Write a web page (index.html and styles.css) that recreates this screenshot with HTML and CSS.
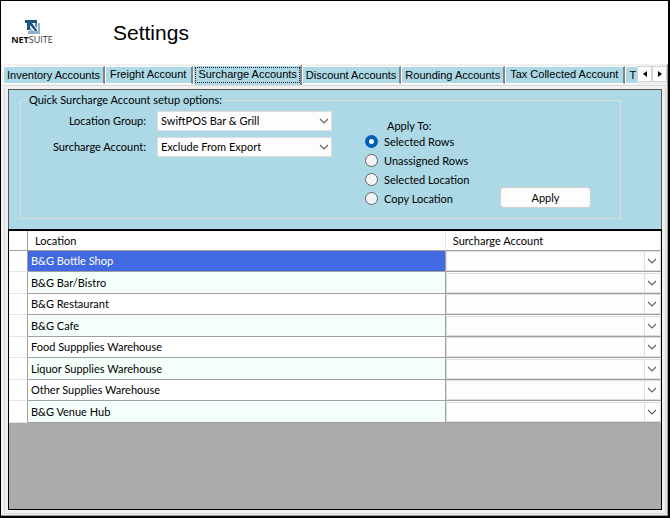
FILE: index.html
```html
<!DOCTYPE html>
<html lang="en">
<head>
  <meta charset="UTF-8" />
  <meta name="viewport" content="width=device-width, initial-scale=1.0"/>
  <title>Settings</title>
  <link rel="stylesheet" href="styles.css">
</head>
<body>

  <!-- Shared icons -->
  <svg class="sprite" aria-hidden="true">
    <symbol id="chevron" viewBox="0 0 10 6">
      <path d="M1 1l4 4 4-4" fill="none" stroke="currentColor" stroke-width="1.2"/>
    </symbol>
  </svg>

  <div class="window">

    <!-- Logo and title -->
    <header class="header">
      <div class="logo">
        <svg class="logo-mark" viewBox="0 0 15 14" aria-hidden="true">
          <path d="M0 0h12v3H5v7H2V3H0z" fill="#1d5480"/>
          <path d="M13 3h2v11H3v-3h10z" fill="#8fb0c8"/>
          <path d="M5 3h2l5 7v1h-2L5 5z" fill="#1d5480"/>
          <path d="M10 3h2v5l-2-2z" fill="#5d8cae"/>
          <path d="M5 7l3 4H5z" fill="#8fb0c8"/>
        </svg>
        <div class="logo-text"><b>NET</b>SUITE</div>
      </div>
      <h1>Settings</h1>
    </header>

    <!-- Tabs -->
    <nav class="tab-bar">
      <div class="tabs" role="tablist">
        <button class="tab" role="tab">Inventory Accounts</button>
        <button class="tab raised" role="tab">Freight Account</button>
        <button class="tab active" role="tab" aria-selected="true">Surcharge Accounts</button>
        <button class="tab" role="tab">Discount Accounts</button>
        <button class="tab" role="tab">Rounding Accounts</button>
        <button class="tab raised" role="tab">Tax Collected Account</button>
        <button class="tab last" role="tab">T</button>
      </div>
      <div class="scroller">
        <button aria-label="Scroll left"><svg viewBox="0 0 4 6"><path d="M4 0v6L0 3z"/></svg></button>
        <button aria-label="Scroll right"><svg viewBox="0 0 4 6"><path d="M0 0v6l4-3z"/></svg></button>
      </div>
    </nav>

    <main class="page">

      <!-- Quick setup -->
      <form class="setup">
        <fieldset>
          <legend>Quick Surcharge Account setup options:</legend>
          <div class="options">
            <div class="fields">
              <label for="group">Location Group:</label>
              <span class="select">
                <select id="group"><option>SwiftPOS Bar &amp; Grill</option></select>
                <svg><use href="#chevron"/></svg>
              </span>
              <label for="account">Surcharge Account:</label>
              <span class="select">
                <select id="account"><option>Exclude From Export</option></select>
                <svg><use href="#chevron"/></svg>
              </span>
            </div>
            <div class="apply-to" role="radiogroup" aria-labelledby="applyTo">
              <div class="apply-title" id="applyTo">Apply To:</div>
              <label><input type="radio" name="apply" checked>Selected Rows</label>
              <label><input type="radio" name="apply">Unassigned Rows</label>
              <label><input type="radio" name="apply">Selected Location</label>
              <label><input type="radio" name="apply">Copy Location</label>
            </div>
            <button class="apply" type="button">Apply</button>
          </div>
        </fieldset>
      </form>

      <!-- Accounts by location -->
      <div class="grid">
        <table>
          <colgroup><col class="col-head"><col><col class="col-account"></colgroup>
          <thead>
            <tr><th></th><th>Location</th><th>Surcharge Account</th></tr>
          </thead>
          <tbody>
            <tr class="selected"><td></td><td>B&amp;G Bottle Shop</td><td><span class="select"><select aria-label="B&amp;G Bottle Shop"></select><svg><use href="#chevron"/></svg></span></td></tr>
            <tr><td></td><td>B&amp;G Bar/Bistro</td><td><span class="select"><select aria-label="B&amp;G Bar/Bistro"></select><svg><use href="#chevron"/></svg></span></td></tr>
            <tr><td></td><td>B&amp;G Restaurant</td><td><span class="select"><select aria-label="B&amp;G Restaurant"></select><svg><use href="#chevron"/></svg></span></td></tr>
            <tr><td></td><td>B&amp;G Cafe</td><td><span class="select"><select aria-label="B&amp;G Cafe"></select><svg><use href="#chevron"/></svg></span></td></tr>
            <tr><td></td><td>Food Suppplies Warehouse</td><td><span class="select"><select aria-label="Food Suppplies Warehouse"></select><svg><use href="#chevron"/></svg></span></td></tr>
            <tr><td></td><td>Liquor Supplies Warehouse</td><td><span class="select"><select aria-label="Liquor Supplies Warehouse"></select><svg><use href="#chevron"/></svg></span></td></tr>
            <tr><td></td><td>Other Supplies Warehouse</td><td><span class="select"><select aria-label="Other Supplies Warehouse"></select><svg><use href="#chevron"/></svg></span></td></tr>
            <tr><td></td><td>B&amp;G Venue Hub</td><td><span class="select"><select aria-label="B&amp;G Venue Hub"></select><svg><use href="#chevron"/></svg></span></td></tr>
          </tbody>
        </table>
      </div>
    </main>
  </div>

</body>
</html>
```
FILE: styles.css
```css
* {
  box-sizing: border-box;
}

body {
  margin: 0;
  font-family: Lato, "Liberation Sans", Arial, sans-serif;
  font-size: 11px;
  line-height: 14px;
  color: #000;
}

button,
select {
  font: inherit;
  color: inherit;
}

.sprite {
  display: none;
}

/* Window frame */
.window {
  display: flex;
  flex-direction: column;
  min-height: 100vh;
  background: #f0f0f0;
  border: 1px solid #000;
  border-right-width: 2px;
  border-bottom-width: 2px;
  box-shadow: inset -1px -1px 0 #999;
}

/* Header */
.header {
  display: flex;
  align-items: center;
  gap: 61px;
  height: 63px;
  padding-left: 11px;
  background: #fff;
}

.logo {
  display: flex;
  flex-direction: column;
  align-items: center;
  width: 40px;
}

.logo-mark {
  width: 15px;
  height: 14px;
}

.logo-text {
  font-family: "Open Sans", sans-serif;
  font-size: 9px;
  line-height: 12px;
  color: #333;
}

.logo-text b {
  font-weight: 700;
  color: #111;
}

h1 {
  margin: 0;
  font-family: "Liberation Sans", Arial, sans-serif;
  font-size: 21px;
  font-weight: normal;
  line-height: 24px;
}

/* Tabs */
.tab-bar {
  display: flex;
  height: 21px;
  padding: 0 1px 0 2px;
  font-family: "Liberation Sans", Arial, sans-serif;
}

.tabs {
  display: flex;
  flex: 1;
  overflow: hidden;
}

.tab {
  flex: none;
  margin: 2px 0 1px;
  padding: 0 3px;
  border: 1px solid #fff;
  border-right: 2px solid #858585;
  background: #add8e6;
  line-height: 12px;
}

.tab.raised {
  padding: 0 5px 2px 4px;
}

.tab.active {
  margin: 1px 0 0;
  padding: 0 3px 4px 4px;
  border-bottom: 0;
  outline: 1px dotted #222;
  outline-offset: -3px;
}

.tab.last {
  flex: 1;
  padding-right: 0;
  border-right: 0;
  text-align: left;
}

.scroller {
  display: flex;
  margin: 2px 0 3px;
}

.scroller button {
  display: grid;
  place-items: center;
  width: 15px;
  padding: 0;
  border: 1px solid #d4d4d4;
  background: #fdfdfd;
}

.scroller svg {
  width: 4px;
  height: 6px;
}

/* Tab page */
.page {
  display: flex;
  flex: 1;
  flex-direction: column;
  margin: 0 2px 2px 3px;
  padding: 3px;
  border: 1px solid #dcdcdc;
}

.setup {
  padding: 3px 40px 10px 11px;
  border: 1px solid #555;
  border-bottom: 0;
  background: #add8e6;
}

fieldset {
  min-width: 0;
  margin: 0;
  padding: 0 0 10px;
  border: 1px solid #dcdcdc;
}

legend {
  margin-left: 6px;
  padding: 0 2px;
}

.options {
  display: flex;
  align-items: flex-start;
}

.fields {
  display: grid;
  grid-template-columns: 125px 175px;
  align-items: center;
  column-gap: 11px;
  row-gap: 6px;
  padding-top: 4px;
}

.fields label {
  text-align: right;
}

/* Drop-downs with a chevron laid over the right end */
.select {
  display: grid;
  align-items: center;
}

.select select {
  grid-area: 1 / 1;
  width: 100%;
  height: 20px;
  padding: 0 20px 0 3px;
  border: 1px solid #ddd;
  border-radius: 0;
  background: #fdfdfd;
  appearance: none;
}

.select svg {
  grid-area: 1 / 1;
  justify-self: end;
  width: 10px;
  height: 6px;
  margin-right: 3px;
  color: #666;
  pointer-events: none;
}

.apply-to {
  width: 168px;
  padding: 12px 0 0 33px;
}

.apply-title {
  padding-left: 22px;
  line-height: 13px;
}

.apply-to label {
  display: flex;
  align-items: center;
  gap: 6px;
  height: 19px;
}

.apply-to input {
  width: 13px;
  height: 13px;
  margin: 0;
  border: 1px solid #666;
  border-radius: 50%;
  background: #f3f3f3;
  appearance: none;
}

.apply-to input:checked {
  border: 4px solid #005fb8;
  background: #fff;
}

.apply {
  align-self: flex-end;
  width: 91px;
  height: 21px;
  padding: 0;
  border: 1px solid #d0d0d0;
  border-radius: 4px;
  background: #fdfdfd;
}

/* Data grid */
.grid {
  flex: 1;
  border: 1px solid #000;
  border-top-width: 2px;
  background: #ababab;
}

table {
  width: 100%;
  border-collapse: separate;
  border-spacing: 0;
  table-layout: fixed;
}

.col-head {
  width: 19px;
}

.col-account {
  width: 33%;
}

th {
  height: 20px;
  padding: 0 7px;
  border-right: 1px solid #e5e5e5;
  border-bottom: 1px solid #a0a0a0;
  background: #fff;
  font-weight: normal;
  text-align: left;
}

td {
  height: 22px;
  padding: 0 3px;
  border-right: 1px solid #a0a0a0;
  border-bottom: 1px solid #a0a0a0;
  background: #fff;
}

tr:nth-child(odd) td {
  height: 21px;
}

tr:nth-child(even) td {
  background: #f5fffa;
}

tbody td:first-child,
tbody tr:nth-child(even) td:first-child {
  border-bottom-color: #e5e5e5;
  background: #fff;
}

th:first-child {
  border-right-color: #a0a0a0;
}

tbody .selected td:nth-child(2) {
  background: #4169e1;
  color: #fff;
}

td:last-child {
  padding: 0;
  border-right: 0;
}

td .select svg {
  width: 16px;
  height: 18px;
  margin-right: 1px;
  padding: 0 3px 0 2px;
  border-left: 1px solid #ddd;
}
```
